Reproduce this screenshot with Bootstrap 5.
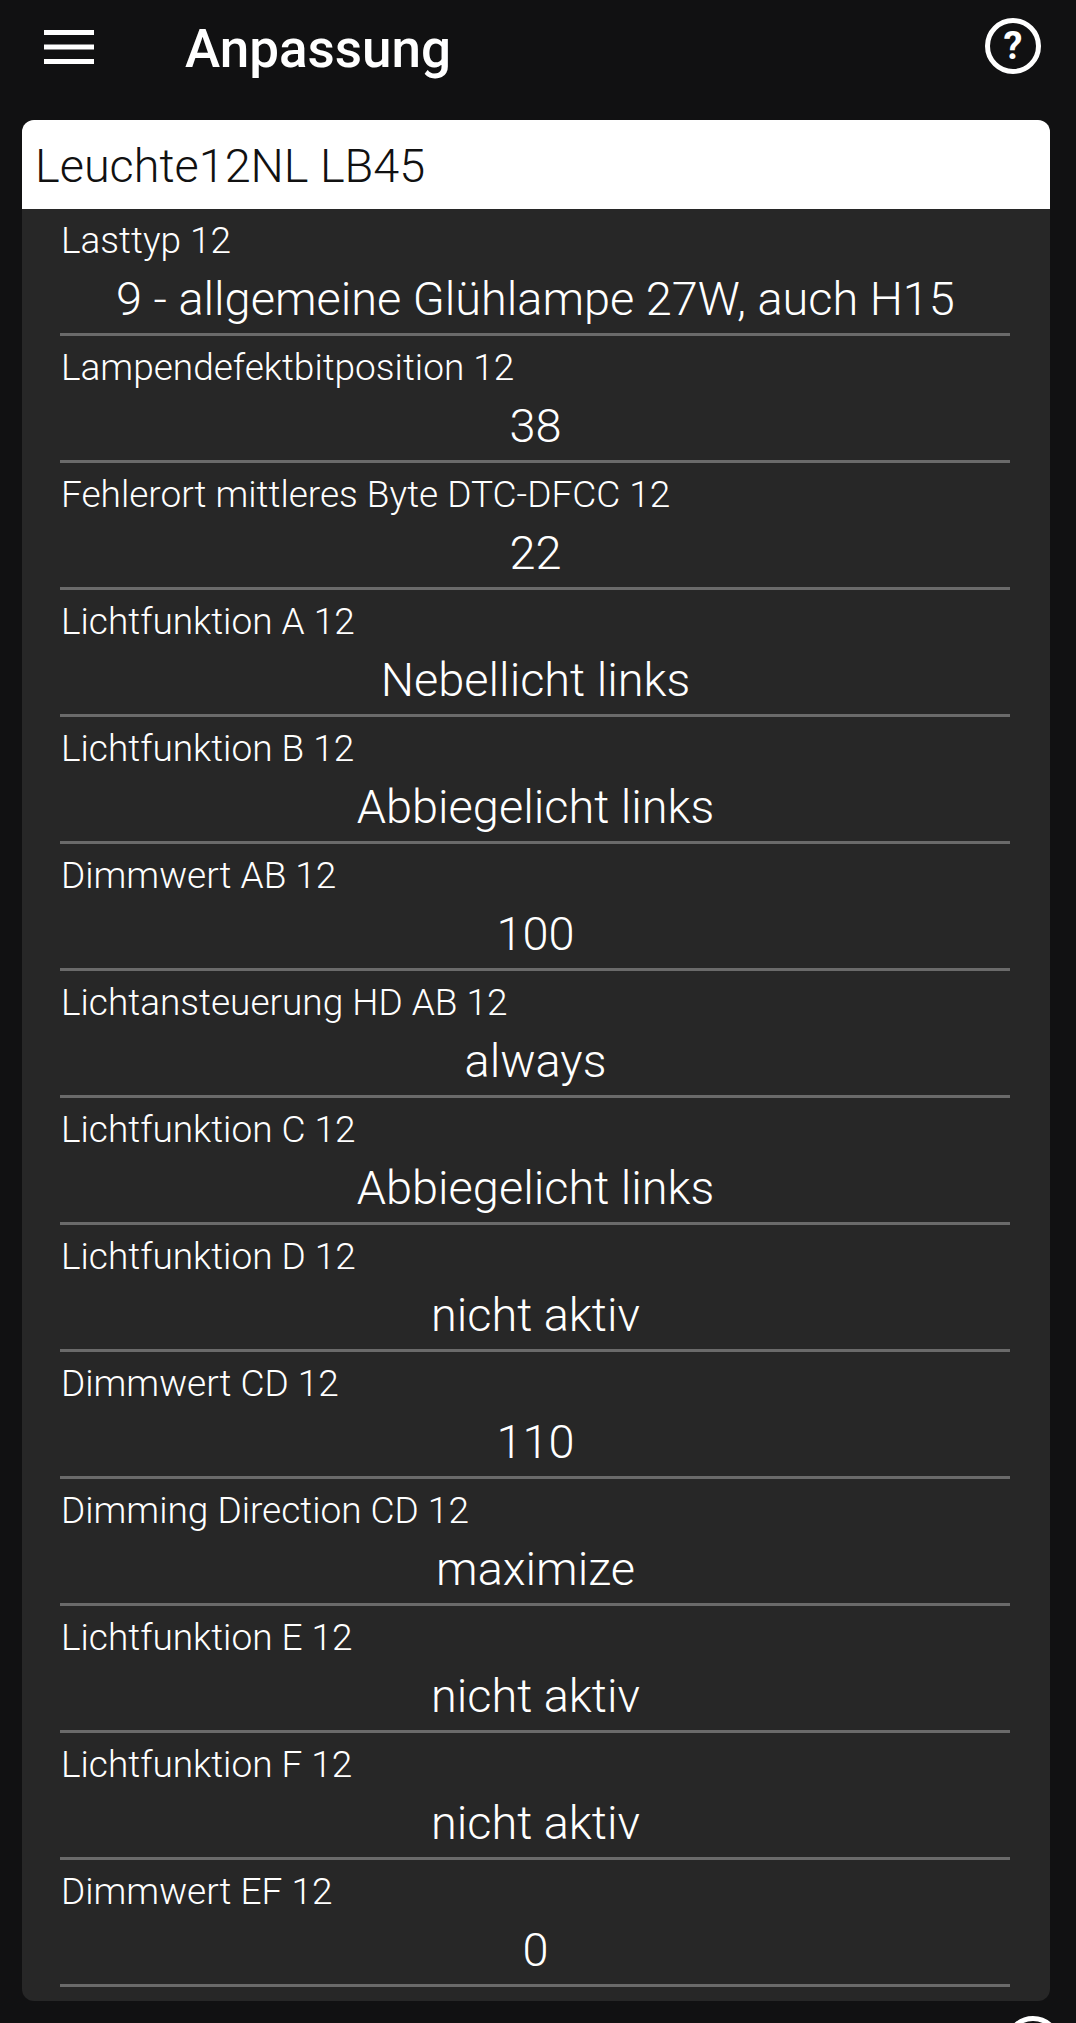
<!DOCTYPE html>
<html lang="de">
<head>
    <meta charset="UTF-8">
    <meta name="viewport" content="width=device-width, initial-scale=1.0">
    <title>Anpassung</title>
    <link rel="stylesheet" href="https://cdn.jsdelivr.net/npm/bootstrap@5.3.2/dist/css/bootstrap.min.css">
    <style>
        html, body { height: 2023px; overflow: hidden; }
        body { background: #111112; font-family: Roboto, "Liberation Sans", sans-serif; font-weight: 300; color: #fff; }
        .app-bar { height: 120px; padding: 0 35px 0 44px; }
        .menu-icon { width: 50px; height: 34px; margin-top: -26px; }
        .app-title { font-size: 53px; font-weight: 500; line-height: 1; margin: -22px 0 0 91px; }
        .help-icon { width: 56px; height: 56px; margin-top: -28px; }
        .panel { margin: 0 26px 0 22px; background: #272727; border: 0; border-radius: 12px; height: 1881px; }
        .panel-head { height: 89px; background: #fff; color: #111; font-size: 46.800px; line-height: 92px; padding: 0 13px; border-radius: 12px 12px 0 0; }
        .setting-row { height: 127px; margin: 0 40px 0 38px; border-bottom: 3px solid #6a6a6a; }
        .setting-label { font-size: 37px; line-height: 43px; padding: 10px 0 0 1px; height: 53px; }
        .setting-value { font-size: 46.900px; line-height: 73.500px; text-align: center; padding-left: 1px; }
        .next-wrap { padding-right: 15px; }
        .next-help { width: 56px; height: 56px; margin: 15px 0 0 auto; display: block; }
    </style>
</head>
<body>
    <!-- Kopfzeile -->
    <nav class="app-bar d-flex align-items-center justify-content-between">
        <div class="d-flex align-items-center">
            <svg class="menu-icon" viewBox="0 0 50 34"><path d="M0 2.5h50M0 17h50M0 31.500h50" stroke="#fff" stroke-width="5"/></svg>
            <h1 class="app-title">Anpassung</h1>
        </div>
        <svg class="help-icon" viewBox="0 0 56 56">
            <circle cx="28" cy="28" r="25.500" fill="none" stroke="#fff" stroke-width="5"/>
            <text x="28" y="41" text-anchor="middle" font-family="Roboto" font-weight="700" font-size="38" fill="#fff">?</text>
        </svg>
    </nav>

    <div class="card panel">
        <div class="panel-head">Leuchte12NL LB45</div>
        <div id="settingsList"></div>
    </div>

    <div class="next-wrap">
        <svg class="next-help" viewBox="0 0 56 56">
            <circle cx="28" cy="28" r="25.500" fill="none" stroke="#fff" stroke-width="5"/>
        </svg>
    </div>

    <script>
        const settings = [
            ['Lasttyp 12', '9 - allgemeine Glühlampe 27W, auch H15'],
            ['Lampendefektbitposition 12', '38'],
            ['Fehlerort mittleres Byte DTC-DFCC 12', '22'],
            ['Lichtfunktion A 12', 'Nebellicht links'],
            ['Lichtfunktion B 12', 'Abbiegelicht links'],
            ['Dimmwert AB 12', '100'],
            ['Lichtansteuerung HD AB 12', 'always'],
            ['Lichtfunktion C 12', 'Abbiegelicht links'],
            ['Lichtfunktion D 12', 'nicht aktiv'],
            ['Dimmwert CD 12', '110'],
            ['Dimming Direction CD 12', 'maximize'],
            ['Lichtfunktion E 12', 'nicht aktiv'],
            ['Lichtfunktion F 12', 'nicht aktiv'],
            ['Dimmwert EF 12', '0']
        ];
        const list = document.getElementById('settingsList');
        settings.forEach(([label, value]) => {
            const row = document.createElement('div');
            row.className = 'setting-row';
            row.innerHTML = `<div class="setting-label">${label}</div><div class="setting-value">${value}</div>`;
            list.appendChild(row);
        });
    </script>
    <script src="https://cdn.jsdelivr.net/npm/bootstrap@5.3.2/dist/js/bootstrap.bundle.min.js"></script>
</body>
</html>
